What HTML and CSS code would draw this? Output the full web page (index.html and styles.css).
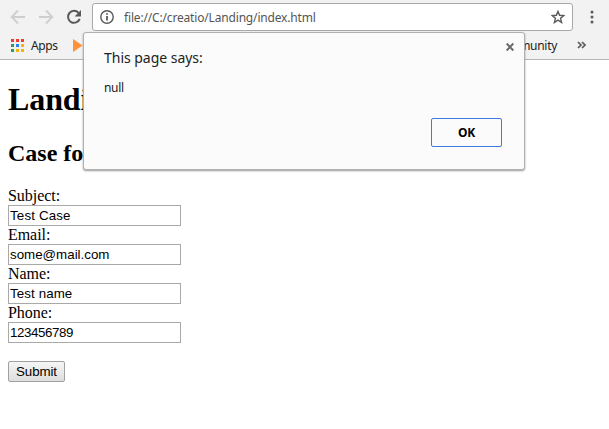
FILE: index.html
```html
<!DOCTYPE html>
<html lang="en">
<head>
<meta charset="utf-8">
<title>Landing</title>
<link rel="stylesheet" href="styles.css">
</head>
<body>
<header class="chrome">
  <div class="toolbar">
    <svg class="nav" width="84" height="34" viewBox="0 0 84 34" fill="none">
      <path d="M25 17H12M18 10.5L11.7 17L18 23.5" stroke="#cecece" stroke-width="1.8"/>
      <path d="M39 17H52M46 10.5L52.3 17L46 23.5" stroke="#cecece" stroke-width="1.8"/>
      <path d="M78.6 12.9A6 6 0 1 0 79.7 18.8" stroke="#5a5a5a" stroke-width="2"/>
      <path d="M81 10v6.4h-6.4z" fill="#5a5a5a"/>
    </svg>
    <div class="address">
      <svg width="14" height="14" viewBox="0 0 14 14" fill="none">
        <circle cx="7" cy="7" r="6.2" stroke="#5a5a5a" stroke-width="1.4"/>
        <path d="M7 6v4.5M7 3.2v1.6" stroke="#5a5a5a" stroke-width="1.8"/>
      </svg>
      <span class="url">file://C:/creatio/Landing/index.html</span>
      <svg class="star" width="14" height="14" viewBox="0 0 14 14" fill="none">
        <path d="M7 1.4L8.6 5.3L12.8 5.6L9.6 8.3L10.6 12.5L7 10.2L3.4 12.5L4.4 8.3L1.2 5.6L5.4 5.3Z" stroke="#5a5a5a" stroke-width="1.4"/>
      </svg>
    </div>
    <svg class="more" width="4" height="14" viewBox="0 0 4 14" fill="#5a5a5a">
      <circle cx="2" cy="2" r="1.5"/><circle cx="2" cy="7" r="1.5"/><circle cx="2" cy="12" r="1.5"/>
    </svg>
  </div>
  <div class="bookmarks">
    <svg width="13" height="13" viewBox="0 0 13 13" shape-rendering="crispEdges">
      <path fill="#f23a30" d="M0 0h3v3H0zM5 0h3v3H5zM10 0h3v3h-3z"/>
      <path fill="#2c9c55" d="M0 5h3v3H0zM0 10h3v3H0z"/>
      <path fill="#2684f0" d="M5 5h3v3H5z"/>
      <path fill="#f9b20a" d="M10 5h3v3h-3zM5 10h3v3H5zM10 10h3v3h-3z"/>
    </svg>
    <span class="apps">Apps</span>
    <svg class="play" width="10" height="13" viewBox="0 0 10 13"><path d="M0 0L9.5 6.5L0 13Z" fill="#ff9138"/></svg>
    <span class="community">Community</span>
    <svg class="overflow" width="9" height="8" viewBox="0 0 9 8" fill="none"><path d="M1 1l3 3l-3 3M5 1l3 3l-3 3" stroke="#5a5a5a" stroke-width="1.7"/></svg>
  </div>
</header>
<main class="page">
  <h1>Landi</h1>
  <h2>Case fo</h2>
  <form>
    <label for="subject">Subject:</label>
    <input id="subject" type="text" value="Test Case">
    <label for="email">Email:</label>
    <input id="email" type="text" value="some@mail.com">
    <label for="name">Name:</label>
    <input id="name" type="text" value="Test name">
    <label for="phone">Phone:</label>
    <input id="phone" type="text" value="123456789">
    <button class="submit" type="button">Submit</button>
  </form>
</main>
<section class="dialog" role="alertdialog">
  <div class="dialog-head">
    <span class="title">This page says:</span>
    <svg class="close" width="8" height="8" viewBox="0 0 8 8"><path d="M.7 .5l6.6 7M7.3 .5L.7 7.5" stroke="#696969" stroke-width="2"/></svg>
  </div>
  <p class="message">null</p>
  <button class="ok" type="button">OK</button>
</section>
</body>
</html>
```
FILE: styles.css
```css
* { box-sizing: border-box; }
body { margin: 0; height: 429px; overflow: hidden; background: #fff; color: #000; font-family: "Liberation Serif", serif; font-size: 16px; }
svg { display: block; flex: none; }
.chrome { height: 60px; background: #f2f2f2; border-bottom: 1px solid #b6b6b6; font-family: "Noto Sans", sans-serif; font-size: 12px; }
.toolbar { height: 34px; display: flex; align-items: center; }
.address { width: 481px; height: 28px; margin-left: 8px; padding: 0 7px; display: flex; align-items: center; background: #fff; border: 1px solid #a8a8a8; border-radius: 3px; }
.url { margin-left: 10px; color: #555; letter-spacing: -0.17px; white-space: nowrap; }
.star { margin-left: auto; }
.more { margin-left: 17px; }
.bookmarks { height: 22px; display: flex; align-items: center; padding: 0 23px 0 11px; color: #222; }
.apps { margin-left: 7px; letter-spacing: -0.4px; }
.play { margin-left: 15px; }
.community { margin-left: auto; letter-spacing: -0.3px; }
.overflow { margin-left: 20px; }
.page { padding: 0 8px; }
h1 { margin: 21px 0 0; font-size: 32px; line-height: 37px; letter-spacing: -0.1px; }
h2 { margin: 22px 0 0; font-size: 24px; line-height: 27px; }
form { margin-top: 20px; display: flex; flex-direction: column; align-items: flex-start; }
label { line-height: 18px; height: 18px; letter-spacing: -0.05px; }
input { width: 173px; height: 21px; margin: 0; padding: 1px; border: 1px solid #a9a9a9; border-radius: 0; background: #fff; color: #000; font: 13.33px "Liberation Sans", sans-serif; letter-spacing: 0; }
#subject { letter-spacing: 0.15px; }
#name { letter-spacing: 0.1px; }
#phone { letter-spacing: -0.4px; }
.submit { width: 57px; height: 21px; margin-top: 18px; padding: 0; border: 1px solid #a0a0a0; border-radius: 2px; background: linear-gradient(#f6f6f6, #dddddd); color: #000; font: 13.33px "Liberation Sans", sans-serif; letter-spacing: -0.1px; }
.dialog { position: absolute; left: 83px; top: 32px; width: 442px; height: 138px; padding: 0 22px 0 20px; display: flex; flex-direction: column; background: #fbfbfb; border: 1px solid #b0b0b0; border-radius: 3px; box-shadow: 0 1px 2px rgba(0,0,0,.4); font-family: "Noto Sans", sans-serif; color: #222; }
.dialog-head { display: flex; justify-content: space-between; padding-top: 15px; }
.title { font-size: 14px; line-height: 20px; letter-spacing: -0.03px; }
.close { margin: -5px -12px 0 0; }
.message { margin: 11px 0 0; font-size: 12px; line-height: 18px; letter-spacing: -0.3px; }
.ok { width: 71px; height: 29px; margin: 21px 0 0; align-self: flex-end; border: 1px solid #3e7ae0; border-radius: 2px; background: #fbfbfb; color: #000; font: bold 12px "Noto Sans", sans-serif; letter-spacing: -0.3px; padding-bottom: 2px; }
```
